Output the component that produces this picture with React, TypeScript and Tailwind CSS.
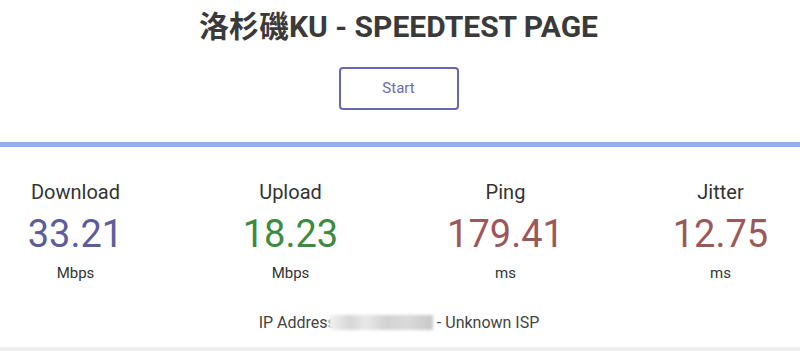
import React from "react";

const results = [
  { label: "Download", value: "33.21", unit: "Mbps", color: "text-[#5c5c9e]" },
  { label: "Upload", value: "18.23", unit: "Mbps", color: "text-[#3d8b40]" },
  { label: "Ping", value: "179.41", unit: "ms", color: "text-[#9c5858]" },
  { label: "Jitter", value: "12.75", unit: "ms", color: "text-[#9c5858]" },
];

export default function App() {
  return (
    <div className="flex min-h-[351px] w-full flex-col bg-white font-['Roboto','Noto_Sans_CJK_TC',sans-serif] text-[#333]">
      <h1 className="pr-[3px] pt-[9px] text-center text-[30px] font-bold leading-[36px] text-[#3a3a3a]">
        洛杉磯KU - SPEEDTEST PAGE
      </h1>
      <div className="mt-[22px] flex justify-center pr-[3px]">
        <button className="h-[43px] w-[120px] rounded-[4px] border-2 border-[#6767b3] text-[15px] text-[#6b6bb0]">
          Start
        </button>
      </div>
      <div className="mt-[32px] h-[5px] bg-[#8fb0ee]" />
      <div className="mt-[33px] flex justify-center overflow-hidden pr-[4px]">
        {results.map((r) => (
          <div key={r.label} className="flex w-[215px] shrink-0 flex-col items-center">
            <div className="text-[20px] leading-[24px]">{r.label}</div>
            <div className={`mt-[8px] text-[38px] leading-[44px] ${r.color}`}>{r.value}</div>
            <div className="mt-[7px] text-[15px] leading-[20px]">{r.unit}</div>
          </div>
        ))}
      </div>
      <div className="mt-[29px] flex justify-center pr-[2px] text-[16px] leading-[22px] text-[#444]">
        <span>IP Address</span>
        <span className="ml-[-7px] mt-[3px] inline-block h-[15px] w-[104px] bg-[linear-gradient(90deg,#f4f4f4_0%,#d6d6d6_20%,#e8e8e8_35%,#d2d2d2_55%,#dadada_75%,#c8c8c8_100%)] blur-[1.5px]" />
        <span className="ml-[4px]">- Unknown ISP</span>
      </div>
      <div className="mt-auto h-[4px] bg-[#efefef]" />
    </div>
  );
}
